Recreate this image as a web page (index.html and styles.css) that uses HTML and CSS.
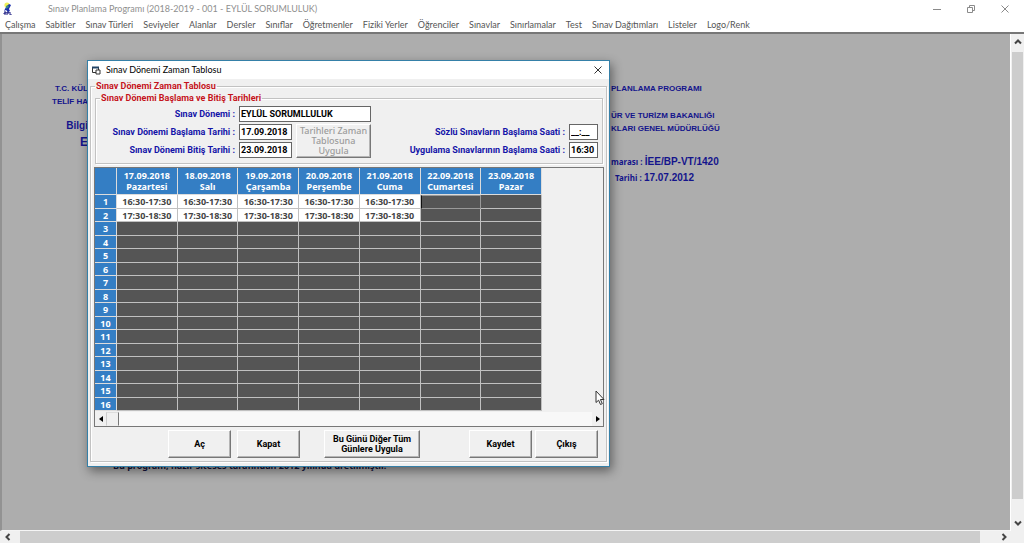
FILE: index.html
```html
<!DOCTYPE html>
<html lang="tr">
<head>
<meta charset="utf-8">
<title>Sınav Planlama Programı</title>
<link rel="stylesheet" href="styles.css">
</head>
<body>
<div class="app">
  <header class="titlebar">
    <svg class="app-icon" viewBox="0 0 10 13" width="10" height="13"><circle cx="4" cy="3" r="2.6" fill="#eef05a"/><path d="M6 2l2 1-2 4 1 2-2 1-2-2-2 1 2-4z" fill="#1a2fae"/><path d="M3 4l2-1 1 2-3 2z" fill="#3c8a86"/><path d="M1 10h2v1H1v1h2M4 13v-3h2v1H4M7 10v3h2" fill="none" stroke="#1c1c82"/></svg>
    <span class="app-title">Sınav Planlama Programı (2018-2019 - 001 - EYLÜL SORUMLULUK)</span>
    <div class="window-buttons">
      <button aria-label="Simge durumuna küçült"><svg width="10" height="10" viewBox="0 0 10 10"><path d="M1 5.500h8"/></svg></button>
      <button aria-label="Önceki boyut"><svg width="10" height="10" viewBox="0 0 10 10"><path d="M1.500 3.500h5v5h-5zM3.500 3.500v-2h5v5h-2"/></svg></button>
      <button aria-label="Kapat"><svg width="10" height="10" viewBox="0 0 10 10"><path d="M1.500 1.500l7 7M8.500 1.500l-7 7"/></svg></button>
    </div>
  </header>
  <nav class="menu">
    <a href="#">Çalışma</a><a href="#">Sabitler</a><a href="#">Sınav Türleri</a><a href="#">Seviyeler</a><a href="#">Alanlar</a><a href="#">Dersler</a><a href="#">Sınıflar</a><a href="#">Öğretmenler</a><a href="#">Fiziki Yerler</a><a href="#">Öğrenciler</a><a href="#">Sınavlar</a><a href="#">Sınırlamalar</a><a href="#">Test</a><a href="#">Sınav Dağıtımları</a><a href="#">Listeler</a><a href="#">Logo/Renk</a>
  </nav>
  <main class="workspace">
    <div class="desktop">
      <div class="about">
        <div class="about-left">
          <p>T.C. KÜL</p><p>TELİF HA</p><p class="about-info">Bilgi</p><p class="about-work">E</p>
        </div>
        <div class="about-right">
          <p>PLANLAMA PROGRAMI</p>
          <p class="about-ministry">ÜR VE TURİZM BAKANLIĞI</p>
          <p>KLARI GENEL MÜDÜRLÜĞÜ</p>
          <p class="about-number"><span>marası :</span> <b>İEE/BP-VT/1420</b></p>
          <p class="about-date"><span>Tarihi :</span> <b>17.07.2012</b></p>
        </div>
      </div>
      <p class="about-foot">Bu program, hazır siteses tarafından 2012 yılında üretilmiştir.</p>

      <section class="dialog" role="dialog" aria-labelledby="dialog-title">
        <header class="dialog-bar">
          <svg width="10" height="10" viewBox="0 0 10 10"><path d="M1.500 2.500h6v5h-6z" fill="#fff" stroke="#333"/><path d="M1 2.500h7" stroke="#246" stroke-width="2"/><path d="M5 5h4v4H5z" fill="#fff" stroke="#333"/></svg>
          <h1 id="dialog-title">Sınav Dönemi Zaman Tablosu</h1>
          <button class="dialog-close" aria-label="Pencereyi kapat"><svg width="10" height="10" viewBox="0 0 10 10"><path d="M1.500 1.500l7 7M8.500 1.500l-7 7"/></svg></button>
        </header>
        <fieldset class="frame">
          <legend>Sınav Dönemi Zaman Tablosu</legend>
          <fieldset class="dates">
            <legend>Sınav Dönemi Başlama ve Bitiş Tarihleri</legend>
            <div class="dates-body">
              <label class="term" for="term">Sınav Dönemi :</label>
              <input class="term-box" id="term" value="EYLÜL SORUMLLULUK">
              <label class="start" for="start">Sınav Dönemi Başlama Tarihi :</label>
              <input class="start-box" id="start" value="17.09.2018">
              <label class="end" for="end">Sınav Dönemi Bitiş Tarihi :</label>
              <input class="end-box" id="end" value="23.09.2018">
              <button class="apply" disabled>Tarihleri Zaman Tablosuna Uygula</button>
              <label class="oral" for="oral">Sözlü Sınavların Başlama Saati :</label>
              <input class="oral-box" id="oral" value="__:__">
              <label class="practice" for="practice">Uygulama Sınavlarının Başlama Saati :</label>
              <input class="practice-box" id="practice" value="16:30">
            </div>
          </fieldset>
          <div class="grid-panel">
            <table class="schedule">
              <thead><tr><th></th><th>17.09.2018<br>Pazartesi</th><th>18.09.2018<br>Salı</th><th>19.09.2018<br>Çarşamba</th><th>20.09.2018<br>Perşembe</th><th>21.09.2018<br>Cuma</th><th>22.09.2018<br>Cumartesi</th><th>23.09.2018<br>Pazar</th></tr></thead>
              <tbody>
                <tr><th>1</th><td class="open">16:30-17:30</td><td class="open">16:30-17:30</td><td class="open">16:30-17:30</td><td class="open">16:30-17:30</td><td class="open">16:30-17:30</td><td class="selected"></td><td></td></tr>
                <tr><th>2</th><td class="open">17:30-18:30</td><td class="open">17:30-18:30</td><td class="open">17:30-18:30</td><td class="open">17:30-18:30</td><td class="open">17:30-18:30</td><td></td><td></td></tr>
                <tr><th>3</th><td></td><td></td><td></td><td></td><td></td><td></td><td></td></tr>
                <tr><th>4</th><td></td><td></td><td></td><td></td><td></td><td></td><td></td></tr>
                <tr><th>5</th><td></td><td></td><td></td><td></td><td></td><td></td><td></td></tr>
                <tr><th>6</th><td></td><td></td><td></td><td></td><td></td><td></td><td></td></tr>
                <tr><th>7</th><td></td><td></td><td></td><td></td><td></td><td></td><td></td></tr>
                <tr><th>8</th><td></td><td></td><td></td><td></td><td></td><td></td><td></td></tr>
                <tr><th>9</th><td></td><td></td><td></td><td></td><td></td><td></td><td></td></tr>
                <tr><th>10</th><td></td><td></td><td></td><td></td><td></td><td></td><td></td></tr>
                <tr><th>11</th><td></td><td></td><td></td><td></td><td></td><td></td><td></td></tr>
                <tr><th>12</th><td></td><td></td><td></td><td></td><td></td><td></td><td></td></tr>
                <tr><th>13</th><td></td><td></td><td></td><td></td><td></td><td></td><td></td></tr>
                <tr><th>14</th><td></td><td></td><td></td><td></td><td></td><td></td><td></td></tr>
                <tr><th>15</th><td></td><td></td><td></td><td></td><td></td><td></td><td></td></tr>
                <tr><th>16</th><td></td><td></td><td></td><td></td><td></td><td></td><td></td></tr>
              </tbody>
            </table>
            <div class="grid-scroll">
              <button aria-label="Sola kaydır"><svg width="6" height="6" viewBox="0 0 6 6"><path d="M5 0v6L1 3z"/></svg></button>
              <span class="grid-thumb"></span>
              <button class="scroll-end" aria-label="Sağa kaydır"><svg width="6" height="6" viewBox="0 0 6 6"><path d="M1 0v6l4-3z"/></svg></button>
            </div>
          </div>
          <div class="actions">
            <button>Aç</button><button>Kapat</button><button class="wide">Bu Günü Diğer Tüm Günlere Uygula</button><button class="save">Kaydet</button><button class="exit">Çıkış</button>
          </div>
        </fieldset>
        <svg class="pointer" width="10" height="16" viewBox="0 0 10 16"><path d="M1 1v11.500l2.600-2.300 1.900 4.300 1.800-.8-1.900-4.200h3.600z" fill="#fff" stroke="#333"/></svg>
      </section>
    </div>
    <div class="vscroll">
      <svg width="8" height="8" viewBox="0 0 8 8"><path d="M1 5.500l3-3 3 3"/></svg>
      <span class="vthumb"></span>
      <svg width="8" height="8" viewBox="0 0 8 8"><path d="M1 2.500l3 3 3-3"/></svg>
    </div>
    <div class="hscroll">
      <svg width="8" height="8" viewBox="0 0 8 8"><path d="M5.500 1l-3 3 3 3"/></svg>
      <span class="hthumb"></span>
      <svg width="8" height="8" viewBox="0 0 8 8"><path d="M2.500 1l3 3-3 3"/></svg>
    </div>
  </main>
</div>
</body>
</html>
```
FILE: styles.css
```css
* { box-sizing: border-box; }
body { margin: 0; font: 9px/12px "Noto Sans", "Open Sans", sans-serif; color: #000; }
button, input { font: inherit; margin: 0; padding: 0; border-radius: 0; }
p, h1 { margin: 0; }
svg { display: block; flex: none; }

.app { display: flex; flex-direction: column; height: 100vh; overflow: hidden; background: #fff; }
.titlebar, .menu, .dialog-bar { font-family: Lato, "Noto Sans", sans-serif; }
.titlebar { display: flex; align-items: center; height: 17px; padding-left: 3px; color: #8f8f8f; }
.app-title { margin-left: 35px; }
.window-buttons { display: flex; gap: 24px; margin-left: auto; padding-right: 14px; }
.window-buttons button { border: 0; background: none; }
.window-buttons path { fill: none; stroke: #8a8a8a; }
.menu { display: flex; align-items: center; gap: 10px; height: 15px; padding-left: 5px; white-space: nowrap; }
.menu a { color: #555; text-decoration: none; }

.workspace { flex: 1; min-height: 0; display: grid; grid-template: minmax(0, 1fr) 12px / minmax(0, 1fr) 14px; border-top: 2px solid #777; background: #f0f0f0; }
.desktop { position: relative; overflow: hidden; background: #adadad; border-left: 2px solid #929292; border-bottom: 1px solid #f5f5f5; }
.about { display: grid; grid-template-columns: 86px auto; column-gap: 523px; justify-content: start; padding-top: 48px; color: #14148c; font-weight: bold; white-space: nowrap; }
.about-left, .about-right { font: bold 8px/13px "Liberation Sans", Arial, sans-serif; }
.about-left { text-align: right; }
.about-left .about-info { margin-top: 11px; font-size: 10px; }
.about-left .about-work { margin-top: 4px; font-size: 12px; }
.about-ministry { margin-top: 14px; }
.about-number { margin-top: 20px; }
.about-date { margin-top: 2px; padding-left: 4px; }
.about-right span { font-size: 8px; font-family: "Noto Sans", sans-serif; }
.about-right b { font-size: 10px; }
.about-foot { margin: 274px 0 0 111px; font: bold 9px/14px "Noto Sans", sans-serif; color: #14143c; white-space: nowrap; }

.dialog { position: absolute; left: 85px; top: 26px; width: 523px; padding-bottom: 4px; background: #f0f0f0; border: 1px solid #3580a8; box-shadow: 2px 4px 10px rgba(0, 0, 0, .45); font-weight: bold; }
.dialog-bar { display: flex; align-items: center; gap: 5px; height: 18px; padding: 0 6px 0 3px; background: #fff; }
.dialog-bar h1 { font-size: 9px; font-weight: normal; }
.dialog-close { margin-left: auto; border: 0; background: none; }
.dialog-close path { fill: none; stroke: #333; }
fieldset { min-width: 0; margin: 0; padding: 0; border: 1px solid #c2c2c2; box-shadow: inset 1px 1px #fff, 1px 1px #fff; }
legend, label, .actions button, .dates input { font-family: Roboto, "Noto Sans", sans-serif; }
legend { padding: 0 1px; color: #c4141c; line-height: 12px; }
.frame { margin: 1px 2px 0; padding: 0 1px 3px 4px; }
.dates { margin-right: 2px; padding: 1px 4px 4px; }
.dates-body { display: grid; grid-template-columns: 135px 53px 75px minmax(0, 1fr) 29px; grid-template-rows: 18px 18px 18px; column-gap: 4px; align-items: center; }
.dates label { color: #1414a8; text-align: right; white-space: nowrap; }
.dates input { width: 100%; height: 16px; padding: 0 1px; border: 1px solid #666; background: #fff; font-weight: bold; line-height: 14px; }
.term { grid-area: 1 / 1; }
.term-box { grid-area: 1 / 2 / auto / span 2; }
.start { grid-area: 2 / 1; }
.start-box { grid-area: 2 / 2; }
.end { grid-area: 3 / 1; }
.end-box { grid-area: 3 / 2; }
.apply { grid-area: 2 / 3 / span 2; height: 34px; }
.oral { grid-area: 2 / 4; }
.oral-box { grid-area: 2 / 5; }
.practice { grid-area: 3 / 4; }
.practice-box { grid-area: 3 / 5; }

.apply, .actions button { border: 1px solid; border-color: #fff #777 #777 #fff; box-shadow: inset -1px -1px #b5b5b5; background: #f0f0f0; font-weight: bold; color: #000; line-height: 10px; }
.apply:disabled { color: #9c9c9c; font-weight: 500; }

.grid-panel { margin: 3px 1px 0 -1px; border: 1px solid #777; background: #f0f0f0; }
.schedule { table-layout: fixed; width: 447px; border-collapse: separate; border-spacing: 0; line-height: 11px; }
.schedule th, .schedule td { padding: 0; border-right: 1px solid #c0c0c0; border-bottom: 1px solid #c0c0c0; text-align: center; }
.schedule th { background: #347ec4; color: #fff; border-color: #dcdcdc; }
.schedule th:first-child { width: 22px; }
.schedule thead tr { height: 27px; }
.schedule tbody tr { height: 14px; }
.schedule tbody tr:nth-child(even) { height: 13px; }
.schedule td { background: #555; color: #444; }
.schedule .open { background: #fff; }
.schedule .selected { border: 1px solid #999; border-left-color: #111; }
.grid-scroll { display: flex; height: 14px; margin-top: 1px; background: #f8f8f8; }
.grid-scroll button { display: grid; place-items: center; width: 11px; border: 0; background: #f0f0f0; }
.grid-thumb { width: 13px; border: 1px solid; border-color: #ddd #777 #eee #ccc; background: #f0f0f0; }
.grid-scroll .scroll-end { margin-left: auto; }
.actions { display: flex; margin-top: 3px; padding: 0 7px 0 73px; }
.actions button { width: 63px; height: 28px; margin-right: 6px; }
.actions .wide { width: 96px; margin-left: 18px; }
.actions .save { margin-left: auto; margin-right: 3px; }
.actions .exit { margin-right: 0; }
.pointer { position: absolute; left: 507px; top: 329px; }

.vscroll { display: flex; flex-direction: column; align-items: center; gap: 6px; padding: 4px 0; border-left: 1px solid #fff; }
.vthumb { flex: 1; width: 11px; margin-bottom: 14px; background: #cdcdcd; }
.hscroll { display: flex; align-items: center; gap: 8px; padding: 0 2px 0 4px; }
.hthumb { flex: 1; height: 100%; margin-right: 12px; background: #cdcdcd; }
.vscroll path, .hscroll path { fill: none; stroke: #444; stroke-width: 2; }
```
